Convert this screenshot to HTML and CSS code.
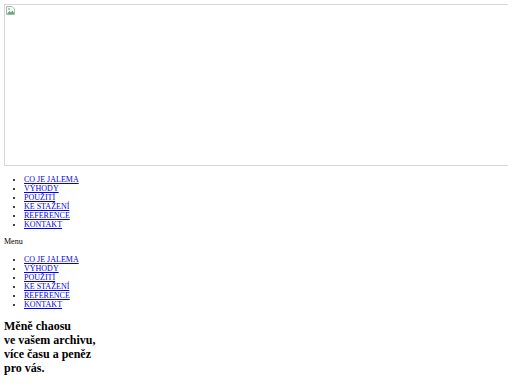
FILE: index.html
```html
<!DOCTYPE html>
<html lang="cs">
    <head>
        <meta charset="utf-8">
        <title>Jalema</title>
        <link rel="stylesheet" href="styles.css">
    </head>
    <body>
        <header>
            <div class="banner">
                <svg class="broken" width="9" height="9" viewBox="0 0 9 9">
                    <path d="M0.5 0.5h5.5l2.5 2.5v5.5h-8z" fill="#f4f7f4" stroke="#a9b8ad"/>
                    <path d="M1 8l2.5-3 1.5 1.5 1.5-2 2 3.5z" fill="#5faa74"/>
                    <circle cx="3" cy="3" r="1" fill="#8fb8d8"/>
                </svg>
            </div>
            <ul class="nav">
                <li><a href="#">CO JE JALEMA</a></li>
                <li><a href="#">VÝHODY</a></li>
                <li><a href="#">POUŽITÍ</a></li>
                <li><a href="#">KE STAŽENÍ</a></li>
                <li><a href="#">REFERENCE</a></li>
                <li><a href="#">KONTAKT</a></li>
            </ul>
            <div class="menu-label">Menu</div>
            <ul class="nav">
                <li><a href="#">CO JE JALEMA</a></li>
                <li><a href="#">VÝHODY</a></li>
                <li><a href="#">POUŽITÍ</a></li>
                <li><a href="#">KE STAŽENÍ</a></li>
                <li><a href="#">REFERENCE</a></li>
                <li><a href="#">KONTAKT</a></li>
            </ul>
        </header>
        <main>
            <h2 class="claim">Měně chaosu<br>ve vašem archivu,<br>více času a peněz<br>pro vás.</h2>
        </main>
    </body>
</html>
```

FILE: styles.css
```css
html {
    overflow: hidden;
}

body {
    margin: 4px;
    font-family: "Liberation Serif", "Times New Roman", serif;
    font-size: 8px;
    line-height: 9px;
    color: black;
    background-color: white;
}

.banner {
    height: 160px;
    margin-right: -20px;
    border: 1px solid #d6d6d6;
    border-right: none;
}

.broken {
    display: block;
    margin: 1px 0 0 1px;
}

.nav {
    margin: 9px 0 8px;
    padding-left: 20px;
    list-style-type: disc;
}

.nav a {
    color: #0000ee;
    text-decoration: underline;
}

.menu-label {
    margin: 0;
}

.claim {
    margin: 10px 0;
    font-size: 12px;
    line-height: 14px;
    font-weight: bold;
}
```
